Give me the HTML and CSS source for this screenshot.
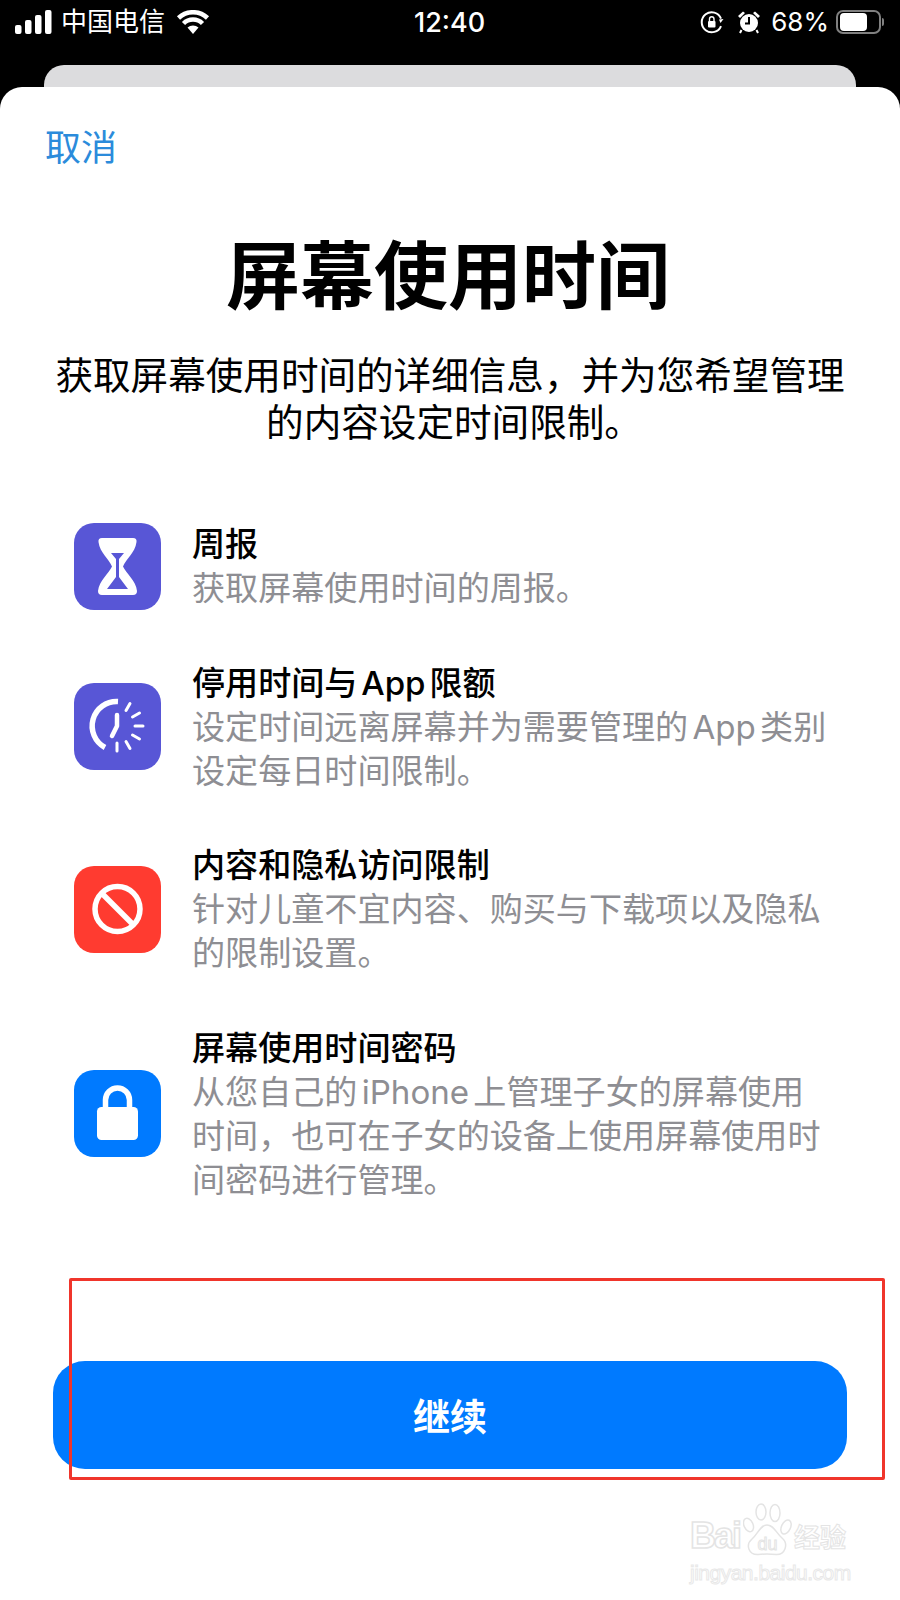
FILE: index.html
```html
<!DOCTYPE html>
<html lang="zh-CN">
<head>
  <meta charset="UTF-8">
  <meta name="viewport" content="width=device-width, initial-scale=1.0">
  <title>屏幕使用时间</title>
  <link rel="stylesheet" href="styles.css">
</head>
<body>
  <div class="top-area">
    <div class="status-bar">
      <div class="status-left">
        <svg class="signal" width="38" height="24" viewBox="0 0 38 24">
          <rect x="0" y="15" width="6.5" height="9" rx="2" fill="#fff"/>
          <rect x="10" y="10" width="6.5" height="14" rx="2" fill="#fff"/>
          <rect x="20" y="5" width="6.5" height="19" rx="2" fill="#fff"/>
          <rect x="30" y="0" width="6.5" height="24" rx="2" fill="#fff"/>
        </svg>
        <span class="carrier">中国电信</span>
        <svg class="wifi" width="34" height="24" viewBox="0 0 34 24">
          <path d="M17 24 L11.5 17.5 A8.5 8.5 0 0 1 22.5 17.5 Z" fill="#fff"/>
          <path d="M2.5 8 A21 21 0 0 1 31.5 8" fill="none" stroke="#fff" stroke-width="4.5"/>
          <path d="M7.5 13.5 A13.5 13.5 0 0 1 26.5 13.5" fill="none" stroke="#fff" stroke-width="4.5"/>
        </svg>
      </div>
      <div class="status-time">12:40</div>
      <div class="status-right">
        <svg width="24" height="24" viewBox="0 0 24 24">
          <path d="M21 8.5 A10 10 0 1 0 21 16" fill="none" stroke="#fff" stroke-width="2"/>
          <path d="M23.5 9 L19 9.5 L20.5 13 Z" fill="#fff"/>
          <rect x="8" y="11" width="7.5" height="6.5" rx="1" fill="#fff"/>
          <path d="M9.5 11 V9 a2.2 2.2 0 0 1 4.5 0 V11" fill="none" stroke="#fff" stroke-width="1.4"/>
        </svg>
        <svg class="alarm" width="24" height="24" viewBox="0 0 24 24">
          <circle cx="12" cy="13" r="9" fill="#fff"/>
          <path d="M1 6 L6 1.5 L8 3 L3 8 Z M23 6 L18 1.5 L16 3 L21 8 Z" fill="#fff"/>
          <path d="M4.5 20 L3 23 M19.5 20 L21 23" stroke="#fff" stroke-width="2"/>
          <path d="M12 7 V13.5 H8" fill="none" stroke="#000" stroke-width="2"/>
        </svg>
        <span class="battery-pct">68%</span>
        <div class="battery">
          <div class="battery-level"></div>
        </div>
        <div class="battery-tip"></div>
      </div>
    </div>
    <div class="peek-card"></div>
  </div>

  <div class="sheet">
    <div class="cancel">取消</div>
    <h1 class="title">屏幕使用时间</h1>
    <p class="intro">获取屏幕使用时间的详细信息，并为您希望管理<br><span class="intro-end">的内容设定时间限制。</span></p>

    <div class="features">
      <div class="feature">
        <svg class="feature-icon" viewBox="0 0 87 87">
          <rect width="87" height="87" rx="20" fill="#5856d6"/>
          <path d="M28 15 H59 q4 0 3.5 4 C61 30 52 36 49 43.5 C52 50 62 58 63 68 q0 4-4 4 H28 q-4 0-4-4 C25 58 35 50 38 43.5 C35 36 26 30 24.5 19 q-.5-4 3.5-4z" fill="#fff"/>
          <path d="M37 30 H50 L45 36 V54 L54 66 H33 L42 54 V36z" fill="#5856d6"/>
        </svg>
        <div class="feature-text">
          <div class="feature-title">周报</div>
          <div class="feature-desc">获取屏幕使用时间的周报。</div>
        </div>
      </div>

      <div class="feature">
        <svg class="feature-icon" viewBox="0 0 87 87">
          <rect width="87" height="87" rx="20" fill="#5856d6"/>
          <path d="M44 18.5 A24.5 24.5 0 0 0 31 64.5" fill="none" stroke="#fff" stroke-width="5.5"/>
          <path d="M43 32 V43 L38 53" fill="none" stroke="#fff" stroke-width="4.5" stroke-linecap="round" stroke-linejoin="round"/>
          <path d="M52 27.5 L56 20.5 M58.5 34 L65.5 30 M61 43 H69 M58.5 52 L65.5 56 M52 58.5 L56 65.5 M43 60 V68" fill="none" stroke="#fff" stroke-width="3" stroke-linecap="round"/>
        </svg>
        <div class="feature-text">
          <div class="feature-title">停用时间与 App 限额</div>
          <div class="feature-desc">设定时间远离屏幕并为需要管理的 App 类别<br>设定每日时间限制。</div>
        </div>
      </div>

      <div class="feature">
        <svg class="feature-icon" viewBox="0 0 87 87">
          <rect width="87" height="87" rx="20" fill="#ff3b30"/>
          <circle cx="43.5" cy="43" r="22.5" fill="none" stroke="#fff" stroke-width="5.5"/>
          <path d="M27.5 27 L59.5 59" stroke="#fff" stroke-width="5.5"/>
        </svg>
        <div class="feature-text">
          <div class="feature-title">内容和隐私访问限制</div>
          <div class="feature-desc">针对儿童不宜内容、购买与下载项以及隐私<br>的限制设置。</div>
        </div>
      </div>

      <div class="feature">
        <svg class="feature-icon" viewBox="0 0 87 87">
          <rect width="87" height="87" rx="20" fill="#007aff"/>
          <path d="M31.5 38 V30 a12 12 0 0 1 24 0 V38" fill="none" stroke="#fff" stroke-width="5.5"/>
          <rect x="23" y="37" width="41" height="33" rx="4.5" fill="#fff"/>
        </svg>
        <div class="feature-text">
          <div class="feature-title">屏幕使用时间密码</div>
          <div class="feature-desc">从您自己的 iPhone 上管理子女的屏幕使用<br>时间，也可在子女的设备上使用屏幕使用时<br>间密码进行管理。</div>
        </div>
      </div>
    </div>

    <div class="continue-btn">继续</div>
  </div>

  <!-- red box drawn over the screenshot -->
  <div class="red-box"></div>

  <div class="watermark">
    <div class="wm-top">
      <span class="wm-bai">Bai</span>
      <svg class="wm-paw" width="49" height="53" viewBox="0 0 49 53">
        <g fill="#fff" stroke="#e4e4e4" stroke-width="1.5">
          <ellipse cx="5.5" cy="22" rx="4.5" ry="7" transform="rotate(-25 5.5 22)"/>
          <ellipse cx="18" cy="9" rx="5" ry="8"/>
          <ellipse cx="32" cy="10" rx="5" ry="8.5"/>
          <ellipse cx="43" cy="24" rx="4.5" ry="7.5" transform="rotate(25 43 24)"/>
          <path d="M24 22 C31 22 33 30 39 35 C46 41 42 52 33 51.5 C28 51 20 51 15 51.5 C6 52 2 42 9 36 C15 31 17 22 24 22z"/>
        </g>
        <text class="wm-du" x="24.5" y="47" text-anchor="middle">du</text>
      </svg>
      <span class="wm-cn">经验</span>
    </div>
    <div class="wm-url">jingyan.baidu.com</div>
  </div>
</body>
</html>
```

FILE: styles.css
```css
* {
  box-sizing: border-box;
}

body {
  margin: 0;
  width: 900px;
  height: 1600px;
  overflow: hidden;
  position: relative;
  display: flex;
  flex-direction: column;
  background: #000;
  font-family: Inter, "Noto Sans CJK SC", sans-serif;
}

.top-area {
  height: 87px;
  flex-shrink: 0;
  background: #000;
  overflow: hidden;
}

.status-bar {
  height: 65px;
  padding: 10px 16px 0 15px;
  display: flex;
  justify-content: space-between;
  align-items: flex-start;
  position: relative;
  color: #fff;
}

.status-left,
.status-right {
  display: flex;
  align-items: center;
  height: 24px;
}

.carrier {
  margin-left: 8px;
  font-size: 26px;
  line-height: 24px;
}

.wifi {
  margin-left: 11px;
}

.status-time {
  position: absolute;
  left: 414px;
  top: 10px;
  font-size: 27px;
  font-weight: 500;
  line-height: 26px;
}

.alarm {
  margin-left: 13px;
}

.battery-pct {
  margin-left: 10px;
  font-size: 26px;
  line-height: 24px;
}

.battery {
  margin-left: 7px;
  width: 45px;
  height: 24px;
  padding: 1px 2px;
  border: 2px solid #808080;
  border-radius: 7px;
}

.battery-level {
  width: 27px;
  height: 100%;
  background: #fff;
  border-radius: 4px;
}

.battery-tip {
  margin-left: 1px;
  width: 2px;
  height: 8px;
  background: #808080;
  border-radius: 0 2px 2px 0;
}

.peek-card {
  margin: 0 44px;
  height: 40px;
  background: #dcdcde;
  border-radius: 20px 20px 0 0;
}

.sheet {
  flex: 1;
  display: flex;
  flex-direction: column;
  padding-top: 36px;
  background: #fff;
  border-radius: 22px 22px 0 0;
}

.cancel {
  margin-left: 45px;
  color: #2b8bdb;
  font-size: 36px;
  line-height: 50px;
}

.title {
  margin: 63px 4px 0 0;
  text-align: center;
  color: #000;
  font-size: 74px;
  font-weight: 700;
  line-height: 80px;
}

.intro {
  margin: 36px 0 0;
  text-align: center;
  color: #000;
  font-size: 37.6px;
  line-height: 47px;
}

.intro-end {
  padding-left: 8px;
}

.features {
  margin-top: 76px;
  padding-left: 74px;
  display: flex;
  flex-direction: column;
  gap: 50.5px;
}

.feature {
  display: flex;
  align-items: center;
  gap: 31px;
}

.feature-icon {
  width: 87px;
  height: 87px;
  flex-shrink: 0;
}

.feature-text {
  word-spacing: -5px;
}

.feature-title {
  color: #000;
  font-size: 33.1px;
  font-weight: 500;
  line-height: 44px;
}

.feature-desc {
  color: #8e8e93;
  font-size: 33.1px;
  line-height: 44px;
}

.continue-btn {
  margin: auto 53px 131px;
  height: 108px;
  display: flex;
  justify-content: center;
  align-items: center;
  background: #007aff;
  border-radius: 32px;
  color: #fff;
  font-size: 37px;
  font-weight: 600;
}

.red-box {
  position: absolute;
  left: 69px;
  top: 1278px;
  width: 816px;
  height: 202px;
  border: 3px solid #f0352b;
  border-radius: 2px;
}

.watermark {
  position: absolute;
  left: 690px;
  top: 1503px;
  width: 170px;
}

.wm-top {
  display: flex;
  align-items: flex-end;
  height: 53px;
  white-space: nowrap;
}

.wm-bai {
  width: 53px;
  font-family: "Liberation Sans", sans-serif;
  font-size: 36px;
  font-weight: 700;
  letter-spacing: -2px;
  line-height: 40px;
  color: #fff;
  -webkit-text-stroke: 1.5px #e4e4e4;
}

.wm-du {
  font-family: "Liberation Sans", sans-serif;
  font-size: 18px;
  fill: #fff;
  stroke: #e4e4e4;
  stroke-width: 1;
}

.wm-cn {
  margin-left: 2px;
  font-size: 26px;
  font-weight: 700;
  line-height: 36px;
  color: #fff;
  -webkit-text-stroke: 1px #e4e4e4;
}

.wm-url {
  margin-top: 5px;
  font-family: "Liberation Sans", sans-serif;
  font-size: 21px;
  letter-spacing: -0.5px;
  line-height: 24px;
  white-space: nowrap;
  color: #fff;
  -webkit-text-stroke: 1px #e8e8e8;
}
```
